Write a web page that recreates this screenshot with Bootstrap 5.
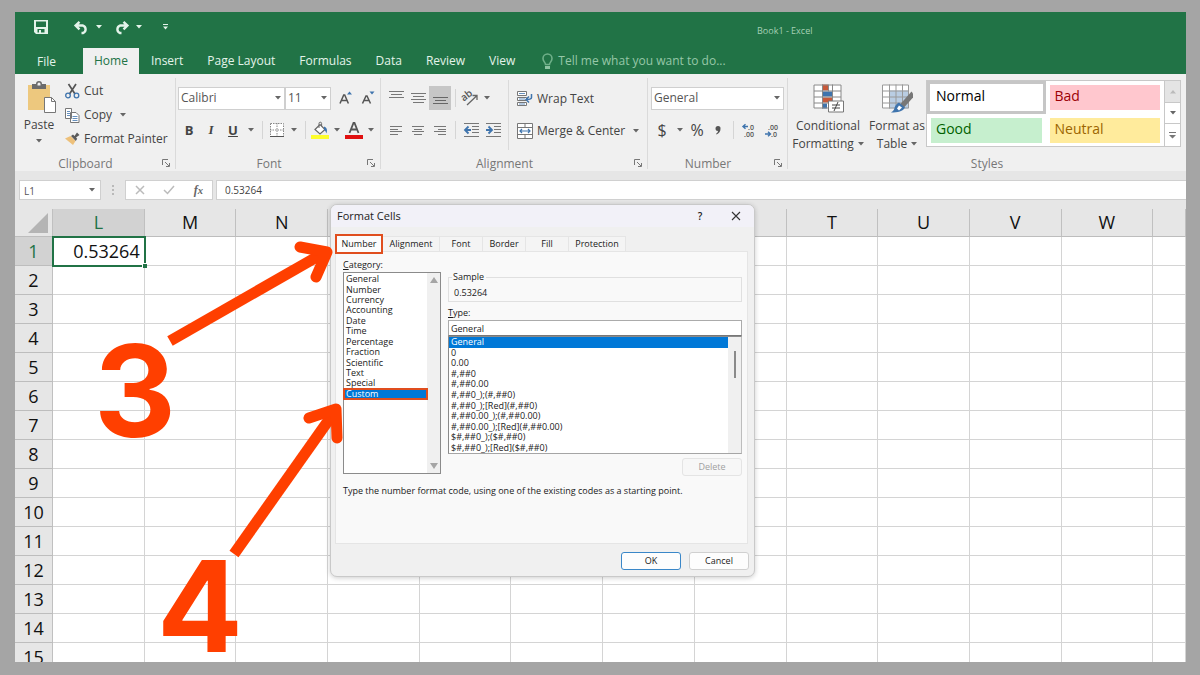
<!DOCTYPE html>
<html lang="en">
<head>
<meta charset="utf-8">
<meta name="viewport" content="width=device-width, initial-scale=1">
<title>Book1 - Excel</title>
<link href="https://cdn.jsdelivr.net/npm/bootstrap@5.3.0/dist/css/bootstrap.min.css" rel="stylesheet">
<style>
  :root { --xl-green: #217346; --xl-ribbon: #f0f0f0; --xl-chrome: #e6e6e6; --xl-line: #d4d4d4; --ui: "Open Sans", "Noto Sans", sans-serif; }
  body { height: 100vh; background: #a5a5a5; padding: 12px 14px 13px 15px; font-family: var(--ui); font-size: 12px; line-height: 16px; color: #444; overflow: hidden; }
  button, select, input { font-family: inherit; color: inherit; }
  svg { display: block; flex: none; overflow: visible; }
  .app-window { background: #fff; }

  /* title bar and ribbon tabs */
  .title-bar { height: 36px; background: var(--xl-green); color: #e4f3ea; padding: 0 0 6px 15px; }
  .title-bar .tool { color: inherit; }
  .undo-tool { margin-left: 18px; }
  .redo-tool { margin-left: 4px; }
  .doc-title { font-size: 9px; color: #a5d0b5; padding-top: 8px; }
  .grow-left { flex-grow: 14; } .grow-right { flex-grow: 9; }
  .tab-bar { height: 26px; background: var(--xl-green); }
  .tab-bar .nav-link { color: #e4f3ea; padding: 4px 12px; line-height: 18px; border-radius: 0; font-size: 12px; }
  .tab-bar .nav-link.active { background: var(--xl-ribbon); color: var(--xl-green); padding: 4px 11px; }
  .tab-bar .file-tab { width: 68px; padding: 5px 10px 3px 22px; }
  .tab-bar .tell-me { color: #96c7a8; padding-left: 14px; }

  /* ribbon */
  .ribbon { display: grid; grid-template-columns: 161px 205px 267px 140px 1fr; background: var(--xl-ribbon); height: 97px; }
  .r-group { display: grid; grid-template-rows: 80px 17px; position: relative; border-right: 1px solid #dadada; border-image: linear-gradient(transparent 5px, #dadada 5px, #dadada 94px, transparent 94px) 1; }
  .r-group:last-child { border-right: 0; border-image: none; }
  .r-foot { display: flex; align-items: center; justify-content: center; color: #777; padding: 2px 19px 0 0; }
  .r-group:last-child .r-foot { padding-right: 0; }
  .launcher { position: absolute; right: 5px; bottom: 4px; }
  .r-rows { padding: 12px 2px 0; display: grid; grid-template-rows: 24px 24px; row-gap: 8px; align-content: start; }
  .r-rows.wide { padding: 12px 4px 0; }
  .r-rows.labelled { padding: 13px 0 0 8px; }
  .r-rows.snug { padding: 12px 3px 0; }
  .r-rows > div { display: flex; align-items: center; }
  .tool { border: 0; background: none; padding: 0; display: flex; align-items: center; justify-content: center; width: 22px; height: 24px; font-size: 13px; color: #444; flex: none; }
  .tool.drop { width: 14px; }
  .tool.icon20 { width: 20px; }
  .tool.pressed { background: #c6c6c6; }
  .v-sep { width: 1px; height: 18px; background: #d5d5d5; margin: 0 4px; flex: none; }
  .tall-sep { width: 1px; background: #dadada; margin: 6px 0 4px; }
  .text-tool { border: 0; background: none; padding: 0; display: flex; align-items: center; height: 24px; white-space: nowrap; }
  .clip-list { padding: 5px 0 0 2px; }
  .ribbon .form-select, .name-box { --bs-form-select-bg-img: url("data:image/svg+xml,%3Csvg xmlns='http://www.w3.org/2000/svg' viewBox='0 0 6 4'%3E%3Cpath d='M0 0h6L3 3.6z' fill='%23666'/%3E%3C/svg%3E"); background-size: 6px 4px; background-position: right 3px center; border: 1px solid #cfcfcf; border-radius: 0; background-color: #fff; height: 23px; padding: 0 10px 0 2px; font-size: 12px; line-height: 20px; color: #555; font-family: var(--ui); }
  .big-tool { border: 0; background: none; padding: 0; display: flex; flex-direction: column; align-items: center; line-height: 18px; white-space: nowrap; }
  .style-tool { padding-top: 10px; }
  .paste-tool { width: 48px; padding-top: 8px; }
  .paste-tool > svg:first-child { margin-left: 6px; }
  .paste-tool > span { margin: 3px 0 5px; }
  .gallery { border: 1px solid #c8c8c8; background: #fff; display: grid; grid-template-columns: 1fr 16px; flex: 1; height: 67px; margin: 6px 5px 0 0; }
  .swatches { display: grid; grid-template-columns: 1fr 1fr; grid-template-rows: 33px 32px; }
  .swatch { border: 3px solid #fff; padding: 0; text-align: left; background: none; font-size: 14px; }
  .swatch > span { display: block; height: 25px; line-height: 22px; padding-left: 5px; margin: 0 1px; }
  .swatch.chosen { border-color: #c6c6c6; }
  .swatch.chosen, .swatch.chosen > span { background: #fff; }
  .s-bad { background: #ffc7ce; color: #9c0006; } .s-good { background: #c6efce; color: #006100; } .s-neutral { background: #ffeb9c; color: #9c6500; }
  .g-scroll { display: grid; grid-template-rows: 22px 21px 1fr; border-left: 1px solid #c8c8c8; }
  .g-scroll button { border: 0; border-bottom: 1px solid #c8c8c8; background: #fff; padding: 0; display: flex; align-items: center; justify-content: center; }
  .g-scroll button:first-child { background: #e4e4e4; }
  .g-scroll button:last-child { border-bottom: 0; }

  /* formula bar */
  .formula-bar { background: var(--xl-chrome); padding: 9px 0 9px 4px; display: flex; height: 38px; }
  .name-box { width: 82px; height: 20px; font-size: 10px; padding: 0 12px 0 4px; background-position: right 5px center; }
  .fx-box { border: 1px solid #d0d0d0; background: #fff; width: 88px; height: 20px; display: flex; align-items: center; justify-content: space-around; }
  .fx-box button { border: 0; background: none; padding: 0; }
  .fx-box .fx-mark { font: italic 700 12px/14px "Liberation Serif", serif; color: #666; }
  .fx-input { flex: 1; border: 1px solid #d0d0d0; border-right: 0; background: #fff; height: 20px; padding: 0 8px; font-size: 10px; margin-left: 3px; min-width: 0; border-radius: 0; }

  /* sheet */
  .sheet-area { min-height: 0; overflow: hidden; }
  .sheet { table-layout: fixed; width: 100%; border-collapse: separate; border-spacing: 0; color: #111; }
  .sheet th { background: var(--xl-chrome); font-weight: 400; text-align: center; padding: 0; font-size: 18px; line-height: 28px; border-right: 1px solid #c0c0c0; border-bottom: 1px solid #bdbdbd; }
  .sheet thead th { height: 28px; line-height: 27px; }
  .sheet tbody tr { height: 29px; }
  .sheet td { padding: 0 4px 0 0; border-right: 1px solid var(--xl-line); border-bottom: 1px solid var(--xl-line); font-size: 18px; line-height: 28px; text-align: right; }
  .sheet col.idx { width: 38px; } .sheet col.std { width: 7.83%; }
  .sheet th.current { background: #d2d2d2; color: var(--xl-green); }
  .sheet thead th.current { border-bottom-color: var(--xl-green); }
  .sheet td.current { position: relative; outline: 2px solid var(--xl-green); outline-offset: -1px; }
  .sheet td.current::after { content: ""; position: absolute; right: -3px; bottom: -3px; width: 5px; height: 5px; background: var(--xl-green); border: 1px solid #fff; border-width: 1px 0 0 1px; }

  /* format cells dialog */
  .fc-dialog { position: absolute; left: 315px; top: 192px; width: 425px; background: #f0f0f0; border: 1px solid #c9c9c9; border-radius: 7px; box-shadow: 0 1px 5px rgba(0,0,0,.2); overflow: hidden; font-size: 9px; line-height: 12px; color: #1a1a1a; }
  .fc-head { height: 22px; background: #f2f1f8; padding: 0 6px; display: flex; align-items: center; font-size: 11px; color: #222; }
  .fc-head button { border: 0; background: none; padding: 0; width: 24px; display: flex; justify-content: center; font-size: 10px; }
  .fc-help { margin-right: 12px; }
  .fc-tabs { margin: 7px 6px 0 4px; height: 17px; align-items: flex-end; }
  .fc-tabs .nav-link { font-size: 9px; line-height: 12px; color: #1a1a1a; padding: 1px 0; height: 15px; border: 1px solid #e5e5e5; border-bottom: 0; border-left: 0; background: #f4f4f4; border-radius: 0; text-align: center; }
  .fc-tabs .nav-link.active { border: 2px solid #e04e1e; background: #fcfcfc; height: 20px; padding: 2px 0; margin-bottom: -3px; position: relative; z-index: 1; }
  .t43 { width: 43px; } .t48 { width: 48px; } .t57 { width: 57px; }
  .fc-panel { margin: 0 6px 0 4px; border: 1px solid #e5e5e5; background: #f9f9f9; padding: 7px 5px 46px 7px; }
  .fc-cols { display: grid; grid-template-columns: 98px 1fr; column-gap: 7px; }
  .fc-caption { padding-bottom: 1px; }
  .listbox { border: 1px solid #8b8b8b; background: #fff; display: grid; grid-template-columns: 1fr 13px; }
  .listbox .list-group { border-radius: 0; min-width: 0; }
  .listbox .list-group-item { flex: 1 1 0; min-height: 0; border: 0; padding: 0 2px; font-size: 9px; line-height: 10px; color: #1a1a1a; background: none; white-space: nowrap; border-radius: 0; }
  .listbox .list-group-item.active { background: #0078d7; color: #fff; margin: 0; }
  .cat-box { height: 202px; }
  .cat-box .list-group { height: 126px; padding-top: 1px; }
  .cat-box .list-group-item.active { outline: 2px solid #e04e1e; outline-offset: -1px; z-index: 1; }
  .type-box { height: 118px; border-color: #8b8b8b #bdbdbd #a5a5a5 #8b8b8b; }
  .type-box .list-group { height: 116px; }
  .track { background: #f0f0f0; display: flex; flex-direction: column; align-items: center; justify-content: space-between; padding: 4px 0; }
  .type-box .track { justify-content: flex-start; padding-top: 14px; }
  .right-col { padding-top: 13px; }
  .sample { border: 1px solid #e0e0e0; height: 30px; margin: 0; padding: 0 5px; min-width: 0; }
  .sample legend { float: none; width: auto; font-size: 9px; line-height: 10px; margin: 0 0 0 -2px; padding: 0 2px 0 1px; }
  .sample > div { padding-top: 5px; }
  .type-label { padding: 5px 0 1px; }
  .type-input { display: block; width: 100%; height: 16px; border: 1px solid #ababab; border-bottom-color: #777; padding: 0 2px; font-size: 9px; background: #fff; }
  .fc-note { padding-top: 9px; }
  .fc-btn { font-size: 9px; line-height: 12px; width: 60px; height: 18px; padding: 0; border: 1px solid #d0d0d0; border-radius: 3px; background: #fdfdfd; color: #1a1a1a; }
  .fc-btn.go { border-color: #3a87c8; }
  .fc-btn:disabled { color: #a0a0a0; border-color: #e4e4e4; background: #f7f7f7; opacity: 1; }
  .fc-foot { padding: 8px 5px 6px; display: flex; justify-content: flex-end; gap: 8px; }

  /* step callouts over the window */
  .callouts { position: absolute; left: 0; top: 0; pointer-events: none; }
</style>
</head>
<body>
<div class="app-window d-flex flex-column h-100 position-relative overflow-hidden">

  <header>
    <div class="title-bar d-flex align-items-center">
      <button class="tool" aria-label="Save"><svg width="14" height="14" viewBox="0 0 14 14"><path fill="currentColor" fill-rule="evenodd" d="M0 0h14v14H2L0 12zM2 1.5v5.500h10V1.500zM3.500 9v3.500H5V10h2v2.500h3.500V9z"/></svg></button>
      <button class="tool undo-tool" aria-label="Undo"><svg width="15" height="13" viewBox="0 0 15 13"><path d="M1.500 4.500h7.500a4 4 0 0 1 0 7.500H7.500M5.500.8 1.600 4.500l3.900 3.800" fill="none" stroke="currentColor" stroke-width="2.400"/></svg></button>
      <button class="tool drop" aria-label="Undo list"><svg width="6" height="4"><path d="M0 0h6L3 3.500z" fill="currentColor"/></svg></button>
      <button class="tool redo-tool" aria-label="Redo"><svg width="15" height="13" viewBox="0 0 15 13"><path d="M13.500 4.500H6a4 4 0 0 0 0 7.500h1.500M9.500.8l3.900 3.700-3.900 3.800" fill="none" stroke="currentColor" stroke-width="2.400"/></svg></button>
      <button class="tool drop" aria-label="Redo list"><svg width="6" height="4"><path d="M0 0h6L3 3.500z" fill="currentColor"/></svg></button>
      <button class="tool ms-2" aria-label="Customize toolbar"><svg width="5" height="6"><path d="M0 0h5v1H0zM0 2.500h5L2.500 5.500z" fill="currentColor"/></svg></button>
      <span class="grow-left"></span><span class="doc-title">Book1 - Excel</span><span class="grow-right"></span>
    </div>
    <nav class="tab-bar nav flex-nowrap" aria-label="Ribbon tabs">
      <a class="nav-link file-tab" href="#">File</a>
      <a class="nav-link active" href="#">Home</a>
      <a class="nav-link" href="#">Insert</a>
      <a class="nav-link" href="#">Page Layout</a>
      <a class="nav-link" href="#">Formulas</a>
      <a class="nav-link" href="#">Data</a>
      <a class="nav-link" href="#">Review</a>
      <a class="nav-link" href="#">View</a>
      <a class="nav-link tell-me d-flex align-items-center gap-1" href="#"><svg width="13" height="17" viewBox="0 0 13 17"><path d="M4.500 11.500c0-2-2.500-3-2.500-6a4.500 4.500 0 0 1 9 0c0 3-2.500 4-2.500 6z" fill="none" stroke="#6fb089" stroke-width="1.600"/><path d="M4 13h5v3H4z" fill="#8cc3a1"/></svg>Tell me what you want to do...</a>
    </nav>
  </header>

  <section class="ribbon" aria-label="Home">
    <div class="r-group">
      <div class="d-flex">
        <button class="big-tool paste-tool"><svg width="28" height="31" viewBox="0 0 28 31"><path d="M0 3h22v25H0z" fill="#edc87e"/><path d="M4 2h4a3 3 0 0 1 6 0h4v5H4z" fill="#6b6b6b"/><path d="M9.500 3.500h3V2a1.500 1.500 0 0 0-3 0z" fill="#f0f0f0"/><path d="M16.500 15.500h7l4 4v11h-11z" fill="#fff" stroke="#777"/><path d="M23.500 15.500v4h4" fill="none" stroke="#777"/></svg>
          <span>Paste</span><svg width="6" height="4"><path d="M0 0h6L3 3.500z" fill="#666"/></svg></button>
        <div class="clip-list">
          <button class="text-tool gap-1"><svg width="15" height="15" viewBox="0 0 15 15"><path d="M3.500 0 10 10M11 0 4.500 10" stroke="#555" stroke-width="1.700"/><circle cx="3" cy="11.500" r="2.300" fill="none" stroke="#3f74ad" stroke-width="1.300"/><circle cx="11.500" cy="11.500" r="2.300" fill="none" stroke="#3f74ad" stroke-width="1.300"/></svg>Cut</button>
          <button class="text-tool gap-1"><svg width="15" height="15" viewBox="0 0 15 15"><path d="M.5.5h6v10h-6zM5.500 4.500h5.500l3 3v7H5.500z" fill="#fff" stroke="#777"/><path d="M2 3.500h3M2 5.500h3M2 7.500h3M7.500 8.500h5M7.500 10.500h5M7.500 12.500h5" stroke="#3f74ad" stroke-width=".8"/></svg>Copy<svg class="ms-1" width="6" height="4"><path d="M0 0h6L3 3.500z" fill="#666"/></svg></button>
          <button class="text-tool gap-1"><svg width="15" height="14" viewBox="0 0 15 14"><path d="M0 6.500 5.500 4l5 5-2.500 4z" fill="#edc07a"/><path d="m6 4 2-1.500L9.500 4 12 .5 14.500 3 11 5.500l1.200 1.300L10.800 9z" fill="#5b5b5b"/></svg>Format Painter</button>
        </div>
      </div>
      <div class="r-foot">Clipboard</div>
      <svg class="launcher" width="8" height="8" viewBox="0 0 8 8"><path d="M.5 6V.500H6M3 3l4 4M7.500 4v3.500H4" fill="none" stroke="#777"/></svg>
    </div>

    <div class="r-group">
      <div class="r-rows">
        <div>
          <select class="form-select" style="width:107px" aria-label="Font name"><option>Calibri</option></select>
          <select class="form-select" style="width:46px" aria-label="Font size"><option>11</option></select>
          <button class="tool ms-1" aria-label="Grow font"><svg width="14" height="14" viewBox="0 0 14 14"><path d="M1 12.500 4.700 4h1L9.400 12.500M2.600 9.500h5.200" fill="none" stroke="#555" stroke-width="1.500"/><path d="M8 3.500h5L10.500.500z" fill="#3f74ad"/></svg></button>
          <button class="tool" aria-label="Shrink font"><svg width="14" height="14" viewBox="0 0 14 14"><path d="M1.500 12.500 5 5h1l3.500 7.500M3 9.500h5" fill="none" stroke="#555" stroke-width="1.500"/><path d="M8.500.500h5L11 3.500z" fill="#3f74ad"/></svg></button>
        </div>
        <div>
          <button class="tool fw-bold" aria-label="Bold">B</button>
          <button class="tool fw-bold fst-italic" style="font-family:'Liberation Serif',serif" aria-label="Italic">I</button>
          <button class="tool fw-bold text-decoration-underline" aria-label="Underline">U</button>
          <button class="tool drop" aria-label="Underline styles"><svg width="6" height="4"><path d="M0 0h6L3 3.500z" fill="#666"/></svg></button>
          <span class="v-sep"></span>
          <button class="tool icon20" aria-label="Borders"><svg width="14" height="14" viewBox="0 0 14 14"><path d="M0 0h14v14H0z" fill="#fff"/><path d="M.5.500h13v13M.5.500v13M7 0v13M0 7h14" fill="none" stroke="#888" stroke-dasharray="1.500 1"/><path d="M0 13.500h14" stroke="#555"/></svg></button>
          <button class="tool drop" aria-label="Border styles"><svg width="6" height="4"><path d="M0 0h6L3 3.500z" fill="#666"/></svg></button>
          <span class="v-sep"></span>
          <button class="tool icon20" aria-label="Fill color"><svg width="18" height="17" viewBox="0 0 18 17"><path d="m4 7.500 5-5 5 5-5 4.500z" fill="#fff" stroke="#666" stroke-width="1.200"/><path d="M8 6V1.500a1.300 1.300 0 0 1 2.600 0V4" fill="none" stroke="#666"/><path d="M13 4.500c3 1 3.500 3.500 2.500 7-.8-2-1.200-3-2.500-4z" fill="#3f74ad"/><path d="M0 13h18v4H0z" fill="#fdfd2c"/></svg></button>
          <button class="tool drop" aria-label="Fill colors"><svg width="6" height="4"><path d="M0 0h6L3 3.500z" fill="#666"/></svg></button>
          <button class="tool icon20" aria-label="Font color"><svg width="18" height="17" viewBox="0 0 18 17"><path d="M4.500 11 8.500 1h1l4 10M6 7.500h6" fill="none" stroke="#555" stroke-width="1.800"/><path d="M0 13h18v4H0z" fill="#e01010"/></svg></button>
          <button class="tool drop" aria-label="Font colors"><svg width="6" height="4"><path d="M0 0h6L3 3.500z" fill="#666"/></svg></button>
        </div>
      </div>
      <div class="r-foot">Font</div>
      <svg class="launcher" width="8" height="8" viewBox="0 0 8 8"><path d="M.5 6V.500H6M3 3l4 4M7.500 4v3.500H4" fill="none" stroke="#777"/></svg>
    </div>

    <div class="r-group">
      <div class="d-flex">
        <div class="r-rows wide">
          <div>
            <button class="tool" aria-label="Top align"><svg width="15" height="16" viewBox="0 0 15 16"><path d="M0 1.500h15M2 4.500h11M0 7.500h15" stroke="#777"/></svg></button>
            <button class="tool" aria-label="Middle align"><svg width="15" height="16" viewBox="0 0 15 16"><path d="M0 3.500h15M2 6.500h11M0 9.500h15M2 12.500h11" stroke="#777"/></svg></button>
            <button class="tool pressed" aria-label="Bottom align"><svg width="15" height="16" viewBox="0 0 15 16"><path d="M0 7.500h15M2 10.500h11M0 13.500h15" stroke="#666"/></svg></button>
            <span class="v-sep"></span>
            <button class="tool icon20" aria-label="Orientation"><svg width="17" height="16" viewBox="0 0 17 16"><text x="0" y="9" font-size="10" font-weight="600" fill="#555" transform="rotate(-38 5 8)">ab</text><path d="M5 15 14.500 6M15 10V5.500h-4.500" fill="none" stroke="#666" stroke-width="1.300"/></svg></button>
            <button class="tool drop" aria-label="Orientations"><svg width="6" height="4"><path d="M0 0h6L3 3.500z" fill="#666"/></svg></button>
          </div>
          <div>
            <button class="tool" aria-label="Align left"><svg width="12" height="9"><path d="M0 .500h12M0 3.500h8M0 5.500h12M0 8.500h8" stroke="#777"/></svg></button>
            <button class="tool" aria-label="Center"><svg width="12" height="9"><path d="M0 .500h12M2 3.500h8M0 5.500h12M2 8.500h8" stroke="#777"/></svg></button>
            <button class="tool" aria-label="Align right"><svg width="12" height="9"><path d="M0 .500h12M4 3.500h8M0 5.500h12M4 8.500h8" stroke="#777"/></svg></button>
            <span class="v-sep"></span>
            <button class="tool" aria-label="Decrease indent"><svg width="15" height="14" viewBox="0 0 15 14"><path d="M0 .500h15M8 3.500h7M8 6.500h7M8 9.500h7M0 13.500h15" stroke="#777"/><path d="M7 7H2M4.500 3.500 1 7l3.500 3.500" fill="none" stroke="#3f74ad" stroke-width="1.800"/></svg></button>
            <button class="tool" aria-label="Increase indent"><svg width="15" height="14" viewBox="0 0 15 14"><path d="M0 .500h15M8 3.500h7M8 6.500h7M8 9.500h7M0 13.500h15" stroke="#777"/><path d="M0 7h5M2.500 3.500 6 7l-3.500 3.500" fill="none" stroke="#3f74ad" stroke-width="1.800"/></svg></button>
          </div>
        </div>
        <div class="tall-sep"></div>
        <div class="r-rows labelled">
          <div><button class="text-tool gap-1"><svg width="16" height="16" viewBox="0 0 16 16"><path d="M.500.500h9v4h-9zM.500 6.500h9v3h-9zM.500 11.500h9v3h-9z" fill="#fff" stroke="#777"/><path d="M2 2.500h6M2 8h6M2 13h6" stroke="#3f74ad" stroke-width=".8"/><path d="M14.500 3v3.500c0 1.500-1 2-5 2M12 5.500 9 8.500l3 3" fill="none" stroke="#3f74ad" stroke-width="1.500"/></svg>Wrap Text</button></div>
          <div><button class="text-tool gap-1"><svg width="16" height="16" viewBox="0 0 16 16"><path d="M.500.500h15v15H.500zM.500 4.500h15M.500 11.500h15M8 .500v4M8 11.500v4" fill="#fff" stroke="#777"/><path d="M3 8h10M5 6 3 8l2 2M11 6l2 2-2 2" fill="none" stroke="#3f74ad" stroke-width="1.200"/></svg>Merge &amp; Center<svg class="ms-1" width="6" height="4"><path d="M0 0h6L3 3.500z" fill="#666"/></svg></button></div>
        </div>
      </div>
      <div class="r-foot">Alignment</div>
      <svg class="launcher" width="8" height="8" viewBox="0 0 8 8"><path d="M.5 6V.500H6M3 3l4 4M7.500 4v3.500H4" fill="none" stroke="#777"/></svg>
    </div>

    <div class="r-group">
      <div class="r-rows snug">
        <div><select class="form-select" aria-label="Number format"><option>General</option></select></div>
        <div>
          <button class="tool fs-6" aria-label="Accounting format">$</button>
          <button class="tool drop" aria-label="Currencies"><svg width="6" height="4"><path d="M0 0h6L3 3.500z" fill="#666"/></svg></button>
          <button class="tool icon20 fs-6" aria-label="Percent">%</button>
          <button class="tool" aria-label="Comma style"><svg width="6" height="9" viewBox="0 0 6 9"><path d="M3 0a2.500 2.500 0 0 1 2.500 2.700C5.500 5.500 4 7.500 1.500 8.500L1 7.800c1.200-.8 2-1.700 2-2.800A2.500 2.500 0 0 1 3 0z" fill="#555"/></svg></button>
          <span class="v-sep"></span>
          <button class="tool" aria-label="Increase decimal"><svg width="14" height="15" viewBox="0 0 14 15"><text x="6" y="7" font-size="7" font-weight="600" fill="#555">.0</text><text x="2" y="14" font-size="7" font-weight="600" fill="#555">.00</text><path d="M6 3.500H2M3.500 1.300 1 3.500l2.500 2.200" fill="none" stroke="#3f74ad" stroke-width="1.400"/></svg></button>
          <button class="tool" aria-label="Decrease decimal"><svg width="14" height="15" viewBox="0 0 14 15"><text x="4" y="7" font-size="7" font-weight="600" fill="#555">.00</text><text x="7" y="14" font-size="7" font-weight="600" fill="#555">.0</text><path d="M1 11h5M4 8.800 6.500 11 4 13.200" fill="none" stroke="#3f74ad" stroke-width="1.400"/></svg></button>
        </div>
      </div>
      <div class="r-foot">Number</div>
      <svg class="launcher" width="8" height="8" viewBox="0 0 8 8"><path d="M.5 6V.500H6M3 3l4 4M7.500 4v3.500H4" fill="none" stroke="#777"/></svg>
    </div>

    <div class="r-group">
      <div class="d-flex">
        <button class="big-tool style-tool" style="width:80px"><svg width="31" height="29" viewBox="0 0 31 28"><path d="M1 0h27v24H1z" fill="#fff"/><path d="M9 0h6v6H9zM9 13h10v5H9z" fill="#c8593a"/><path d="M9 7h10v5H9zM9 19h5v5H9z" fill="#3f74ad"/><path d="M1 .5h27v23H1zM1 6.500h27M1 12.500h27M1 18.500h27M9.500 0v24M15.500 0v7M19.500 0v24" fill="none" stroke="#888"/><path d="M15.500 16.500h15v11h-15z" fill="#fff" stroke="#777"/><path d="M19 20.500h8M19 23.500h8M25 17.500l-4 9" stroke="#444"/></svg>
          <span class="pt-1">Conditional</span><span class="d-flex align-items-center">Formatting<svg class="ms-1" width="6" height="4"><path d="M0 0h6L3 3.500z" fill="#666"/></svg></span></button>
        <button class="big-tool style-tool" style="width:58px"><svg width="31" height="29" viewBox="0 0 31 28"><path d="M.5.500h26v23H.500z" fill="#fff"/><path d="M7 6h20v18H7z" fill="#b9cde3"/><path d="M.5.500h26v23H.500zM0 6.500h27M0 12.500h27M0 18.500h27M7.500 0v24M14 0v24M20.500 0v24" fill="none" stroke="#999"/><path d="M29.500 7 31 9v4l-9 10-4-3z" fill="#777"/><path d="m17 18 6 5c-2 4-7 5-14 5 3-2 3-3 4-6 1-2 2-3 4-4z" fill="#3f74ad"/><path d="m17 21 3 2-3 3-2-2z" fill="#fff"/></svg>
          <span class="pt-1">Format as</span><span class="d-flex align-items-center">Table<svg class="ms-1" width="6" height="4"><path d="M0 0h6L3 3.500z" fill="#666"/></svg></span></button>
        <div class="gallery">
          <div class="swatches">
            <button class="swatch chosen text-black"><span>Normal</span></button>
            <button class="swatch"><span class="s-bad">Bad</span></button>
            <button class="swatch"><span class="s-good">Good</span></button>
            <button class="swatch"><span class="s-neutral">Neutral</span></button>
          </div>
          <div class="g-scroll">
            <button aria-label="Previous styles"><svg width="6" height="4"><path d="M0 3.500h6L3 0z" fill="#bbb"/></svg></button>
            <button aria-label="Next styles"><svg width="6" height="4"><path d="M0 0h6L3 3.500z" fill="#666"/></svg></button>
            <button aria-label="More styles"><svg width="7" height="7"><path d="M0 0h7v1H0zM0 3h7L3.500 6.500z" fill="#777"/></svg></button>
          </div>
        </div>
      </div>
      <div class="r-foot">Styles</div>
    </div>
  </section>

  <div class="formula-bar">
    <select class="form-select name-box" aria-label="Name box"><option>L1</option></select>
    <span class="d-flex align-items-center justify-content-center" style="width:24px"><svg width="2" height="10"><path d="M0 1h2M0 5h2M0 9h2" stroke="#aaa" stroke-width="1.500"/></svg></span>
    <div class="fx-box">
      <button aria-label="Cancel entry"><svg width="10" height="10"><path d="m1 1 8 8M9 1 1 9" stroke="#bbb" stroke-width="1.500"/></svg></button>
      <button aria-label="Accept entry"><svg width="12" height="10"><path d="m1 5 3.500 3.500L11 1" fill="none" stroke="#bbb" stroke-width="1.500"/></svg></button>
      <button aria-label="Insert function" class="fx-mark">f<small>x</small></button>
    </div>
    <input class="fx-input" aria-label="Formula" value="0.53264">
  </div>

  <main class="sheet-area flex-fill">
    <table class="sheet">
      <colgroup><col class="idx"><col class="std"><col class="std"><col class="std"><col class="std"><col class="std"><col class="std"><col class="std"><col class="std"><col class="std"><col class="std"><col class="std"><col class="std"><col></colgroup>
      <thead><tr>
        <th aria-label="Select all"><svg class="ms-auto me-1" width="20" height="20"><path d="M20 0v20H0z" fill="#b4b4b4"/></svg></th>
        <th class="current">L</th><th>M</th><th>N</th><th></th><th></th><th></th><th></th><th></th><th>T</th><th>U</th><th>V</th><th>W</th><th></th>
      </tr></thead>
      <tbody id="rows"></tbody>
    </table>
  </main>

  <div class="fc-dialog" role="dialog" aria-labelledby="fcTitle">
    <div class="fc-head"><span id="fcTitle" class="flex-fill">Format Cells</span>
      <button class="fc-help fw-semibold" aria-label="Help">?</button>
      <button aria-label="Close"><svg width="10" height="10"><path d="m1 1 8 8M9 1 1 9" stroke="#333" stroke-width="1.100"/></svg></button></div>
    <div class="fc-tabs nav">
      <a class="nav-link active t48" href="#">Number</a><a class="nav-link t57" href="#">Alignment</a><a class="nav-link t43" href="#">Font</a><a class="nav-link t43" href="#">Border</a><a class="nav-link t43" href="#">Fill</a><a class="nav-link t57" href="#">Protection</a>
    </div>
    <div class="fc-panel">
      <div class="fc-cols">
        <div>
          <div class="fc-caption"><u>C</u>ategory:</div>
          <div class="listbox cat-box">
            <div class="list-group" id="cats" aria-label="Category"></div>
            <div class="track"><svg width="8" height="6"><path d="M0 6h8L4 0z" fill="#a5a5a5"/></svg><svg width="8" height="6"><path d="M0 0h8L4 6z" fill="#a5a5a5"/></svg></div>
          </div>
        </div>
        <div class="right-col d-flex flex-column">
          <fieldset class="sample"><legend>Sample</legend><div>0.53264</div></fieldset>
          <label for="typeCode" class="type-label"><u>T</u>ype:</label>
          <input class="type-input" id="typeCode" value="General">
          <div class="listbox type-box">
            <div class="list-group" id="types" aria-label="Type"></div>
            <div class="track"><svg width="2" height="27"><path d="M0 0h2v27H0z" fill="#8a8a8a"/></svg></div>
          </div>
          <button class="fc-btn align-self-end mt-1" disabled>Delete</button>
        </div>
      </div>
      <div class="fc-note">Type the number format code, using one of the existing codes as a starting point.</div>
    </div>
    <div class="fc-foot"><button class="fc-btn go">OK</button><button class="fc-btn">Cancel</button></div>
  </div>

  <svg class="callouts" width="340" height="650" viewBox="15 12 340 650" fill="none" stroke="#ff3f00" stroke-width="11" stroke-linecap="round" stroke-linejoin="round" aria-hidden="true">
    <path d="M170 341 322 254" stroke-linecap="butt"/><path d="m300 247 27 5-11 25"/>
    <path d="M234 554 333 414" stroke-linecap="butt"/><path d="m309 418 27-9 1 29"/>
    <g fill="#ff3f00" stroke="none" font-family="Inter, sans-serif" font-weight="700" font-size="127" text-anchor="middle"><text x="135" y="437">3</text><text x="200" y="652">4</text></g>
  </svg>
</div>

<script>
  const rows = document.getElementById('rows');
  for (let r = 1; r <= 15; r++) {
    const cells = Array.from({ length: 13 }, (_, c) => r === 1 && c === 0 ? '<td class="current">0.53264</td>' : '<td></td>').join('');
    rows.insertAdjacentHTML('beforeend', `<tr><th class="${r === 1 ? 'current' : ''}">${r}</th>${cells}</tr>`);
  }
  const fill = (id, items, chosen) => document.getElementById(id).innerHTML = items.map(t =>
    `<button type="button" class="list-group-item list-group-item-action d-flex align-items-center${t === chosen ? ' active' : ''}">${t}</button>`).join('');
  fill('cats', ['General', 'Number', 'Currency', 'Accounting', 'Date', 'Time', 'Percentage', 'Fraction', 'Scientific', 'Text', 'Special', 'Custom'], 'Custom');
  fill('types', ['General', '0', '0.00', '#,##0', '#,##0.00', '#,##0_);(#,##0)', '#,##0_);[Red](#,##0)', '#,##0.00_);(#,##0.00)', '#,##0.00_);[Red](#,##0.00)', '$#,##0_);($#,##0)', '$#,##0_);[Red]($#,##0)'], 'General');
</script>
<script src="https://cdn.jsdelivr.net/npm/bootstrap@5.3.0/dist/js/bootstrap.bundle.min.js"></script>
</body>
</html>
